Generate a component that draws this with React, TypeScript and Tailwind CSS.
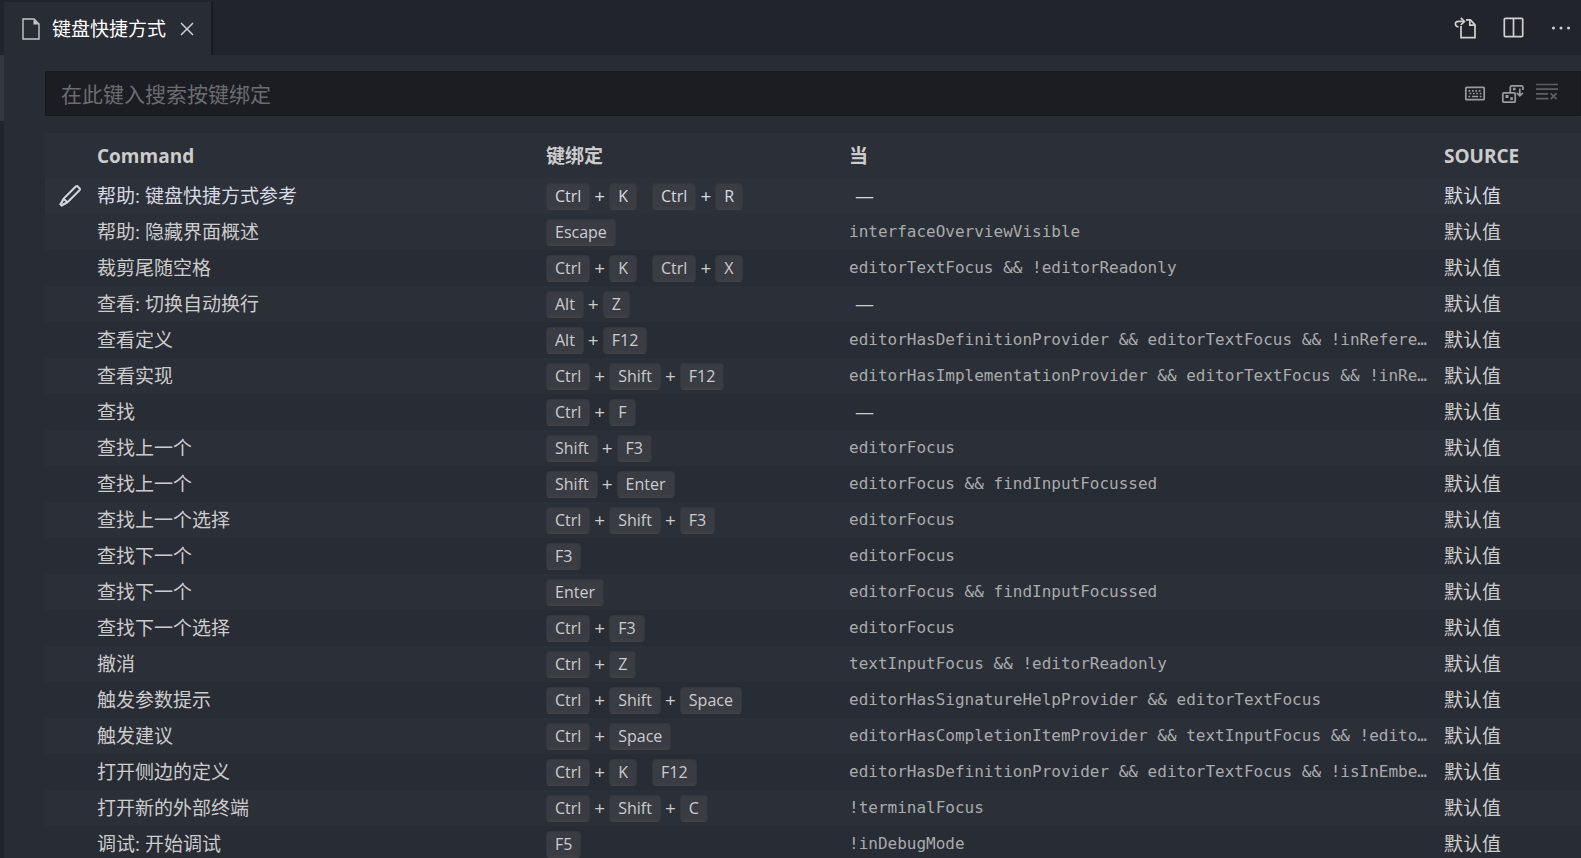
import React from 'react';
import { VscClose, VscEdit, VscEllipsis } from 'react-icons/vsc';

interface Keybinding {
  command: string;
  // chords of keys, e.g. "Ctrl+K Ctrl+R"
  keys: string;
  when?: string;
}

const keybindings: Keybinding[] = [
  { command: '帮助: 键盘快捷方式参考', keys: 'Ctrl+K Ctrl+R' },
  { command: '帮助: 隐藏界面概述', keys: 'Escape', when: 'interfaceOverviewVisible' },
  { command: '裁剪尾随空格', keys: 'Ctrl+K Ctrl+X', when: 'editorTextFocus && !editorReadonly' },
  { command: '查看: 切换自动换行', keys: 'Alt+Z' },
  { command: '查看定义', keys: 'Alt+F12', when: 'editorHasDefinitionProvider && editorTextFocus && !inRefere…' },
  { command: '查看实现', keys: 'Ctrl+Shift+F12', when: 'editorHasImplementationProvider && editorTextFocus && !inRe…' },
  { command: '查找', keys: 'Ctrl+F' },
  { command: '查找上一个', keys: 'Shift+F3', when: 'editorFocus' },
  { command: '查找上一个', keys: 'Shift+Enter', when: 'editorFocus && findInputFocussed' },
  { command: '查找上一个选择', keys: 'Ctrl+Shift+F3', when: 'editorFocus' },
  { command: '查找下一个', keys: 'F3', when: 'editorFocus' },
  { command: '查找下一个', keys: 'Enter', when: 'editorFocus && findInputFocussed' },
  { command: '查找下一个选择', keys: 'Ctrl+F3', when: 'editorFocus' },
  { command: '撤消', keys: 'Ctrl+Z', when: 'textInputFocus && !editorReadonly' },
  { command: '触发参数提示', keys: 'Ctrl+Shift+Space', when: 'editorHasSignatureHelpProvider && editorTextFocus' },
  { command: '触发建议', keys: 'Ctrl+Space', when: 'editorHasCompletionItemProvider && textInputFocus && !edito…' },
  { command: '打开侧边的定义', keys: 'Ctrl+K F12', when: 'editorHasDefinitionProvider && editorTextFocus && !isInEmbe…' },
  { command: '打开新的外部终端', keys: 'Ctrl+Shift+C', when: '!terminalFocus' },
  { command: '调试: 开始调试', keys: 'F5', when: '!inDebugMode' },
];

function Icon({ children }: { children: React.ReactNode }) {
  return (
    <svg width="24" height="24" viewBox="0 0 24 24" fill="none" stroke="currentColor" strokeWidth="1.7" aria-hidden="true">
      {children}
    </svg>
  );
}

function FileIcon() {
  return (
    <svg width="18" height="22" viewBox="0 0 18 22" fill="none" aria-hidden="true">
      <path d="M1 1h11l5 5v15H1z" stroke="#c5c5c5" strokeWidth="1.4" />
      <path d="M11.5 1v5.5H17z" fill="#c5c5c5" />
    </svg>
  );
}

function GoToFileIcon() {
  return (
    <Icon>
      <path d="M8 10v11.7h14V8.8l-4.6-5H13" />
      <path d="M16.8 4v5.2H22" />
      <path d="M5.5 10.8C1.6 10.4 1.2 5.4 5.4 5.4h5.4" />
      <path d="M7.8 1.8l3.6 3.6L7.8 9" />
    </Icon>
  );
}

function SplitIcon() {
  return (
    <Icon>
      <rect x="3.3" y="2.3" width="18.4" height="18.4" rx="1.2" />
      <path d="M12.5 2v19" />
    </Icon>
  );
}

function KeyboardIcon() {
  return (
    <Icon>
      <rect x="2.8" y="5.3" width="18.4" height="12.4" rx="0.8" />
      <path d="M5.5 8.8h13M6.5 11.5h12" strokeDasharray="1.8 1.6" />
      <path d="M5.5 14.5h1.8M9 14.5h6.2M16.8 14.5h1.8" />
    </Icon>
  );
}

function SortPrecedenceIcon() {
  return (
    <Icon>
      <rect x="1.8" y="10.8" width="12.4" height="9.4" rx="1" />
      <path d="M9.3 10V5.2q0-1.4 1.4-1.4h9.8q1.4 0 1.4 1.4V8" />
      <path d="M18.8 6.5v7.3M15.8 10.8l3 3 3-3" />
      <path d="M4.5 13h3v3h-3zM9.3 15.3h2.6v2.6H9.3zM12 5.8h2.6v2.4H12z" fill="currentColor" stroke="none" />
    </Icon>
  );
}

function ClearIcon() {
  return (
    <Icon>
      <path d="M1 2.5h22M1 7.2h22M1 11.9h12M1 16.6h12.5" />
      <path d="M15.6 11.3l6 5.8M21.6 11.3l-6 5.8" />
    </Icon>
  );
}

function Keys({ value }: { value: string }) {
  return (
    <div className="flex items-center gap-[15px]">
      {value.split(' ').map((chord, i) => (
        <span key={i} className="flex items-center gap-1">
          {chord.split('+').map((key, j) => (
            <React.Fragment key={j}>
              {j > 0 && <span className="leading-7">+</span>}
              <kbd className="h-[27px] px-2 rounded-[4px] border border-[#34373c] border-b-[#414246] bg-[#393c43] shadow-[inset_0_-2px_0_#3d3f44] font-[inherit] text-base leading-6">
                {key}
              </kbd>
            </React.Fragment>
          ))}
        </span>
      ))}
    </div>
  );
}

function Tabs() {
  return (
    <header className="flex justify-between h-[55px] pt-[2px] bg-[#21252b]">
      <div className="flex items-center pl-[18px] pr-3 border-r-2 border-[#181a1f] bg-[#282c34]">
        <FileIcon />
        <span className="ml-3 text-white">键盘快捷方式</span>
        <button type="button" aria-label="关闭" className="ml-[9px] text-[#d0d0d0]">
          <VscClose size={24} />
        </button>
      </div>
      <div className="flex items-center gap-6 pr-2 pb-[2px] text-[#d0d0d0]">
        <button type="button" aria-label="打开键盘快捷方式 (JSON)"><GoToFileIcon /></button>
        <button type="button" aria-label="拆分编辑器"><SplitIcon /></button>
        <button type="button" aria-label="更多操作"><VscEllipsis size={24} /></button>
      </div>
    </header>
  );
}

function SearchBar() {
  return (
    <div className="flex items-center h-[45px] mt-4 pr-[21px] border border-[#181a1f] bg-[#1b1d23]">
      <input
        type="text"
        aria-label="搜索按键绑定"
        placeholder="在此键入搜索按键绑定"
        className="flex-1 min-w-0 h-full px-[15px] bg-transparent text-[21px] text-[#abb2bf] placeholder:text-[#6b6c6f] outline-none"
      />
      <div className="flex items-center text-[#9a9b9c]">
        <button type="button" aria-label="录制按键" className="mr-3.5"><KeyboardIcon /></button>
        <button type="button" aria-label="按优先级排序" className="mr-2.5"><SortPrecedenceIcon /></button>
        <button type="button" aria-label="清除" disabled className="text-[#5f6063]"><ClearIcon /></button>
      </div>
    </div>
  );
}

function KeybindingsTable() {
  return (
    <table className="w-full mt-[17px] table-fixed text-left whitespace-nowrap">
      <colgroup>
        <col className="w-[52px]" />
        <col className="w-[449px]" />
        <col className="w-[303px]" />
        <col />
        <col className="w-[137px]" />
      </colgroup>
      <thead>
        <tr className="h-[45px] bg-[#2b2f37]">
          <td />
          <th>Command</th>
          <th>键绑定</th>
          <th>当</th>
          <th>SOURCE</th>
        </tr>
      </thead>
      <tbody>
        {keybindings.map((item, i) => (
          <tr key={i} className="h-9 even:bg-[#2b2f37] first:bg-[#2c313a] first:text-[#d7dae0]">
            <td className="pl-[13px]">
              {i === 0 && (
                <button type="button" aria-label="更改键绑定" className="block">
                  <VscEdit size={24} strokeWidth={0.4} />
                </button>
              )}
            </td>
            <td className="truncate">{item.command}</td>
            <td><Keys value={item.keys} /></td>
            <td className="pr-3">
              {item.when ? (
                <code className="block truncate font-['DejaVu_Sans_Mono',monospace] text-base leading-7 text-[#a9abad]">{item.when}</code>
              ) : (
                <span className="pl-1.5">—</span>
              )}
            </td>
            <td>默认值</td>
          </tr>
        ))}
      </tbody>
    </table>
  );
}

export default function App() {
  return (
    <div className="flex h-screen overflow-hidden bg-[#21252b] font-['Open_Sans','Noto_Sans_CJK_SC',sans-serif] text-[19px] leading-7 text-[#cccccc]">
      <div className="w-1 shrink-0 pt-[55px]">
        <div className="h-[66px] bg-[#333842]" />
      </div>
      <div className="flex-1 min-w-0 bg-[#282c34]">
        <Tabs />
        <main className="pl-[41px]">
          <SearchBar />
          <KeybindingsTable />
        </main>
      </div>
    </div>
  );
}
